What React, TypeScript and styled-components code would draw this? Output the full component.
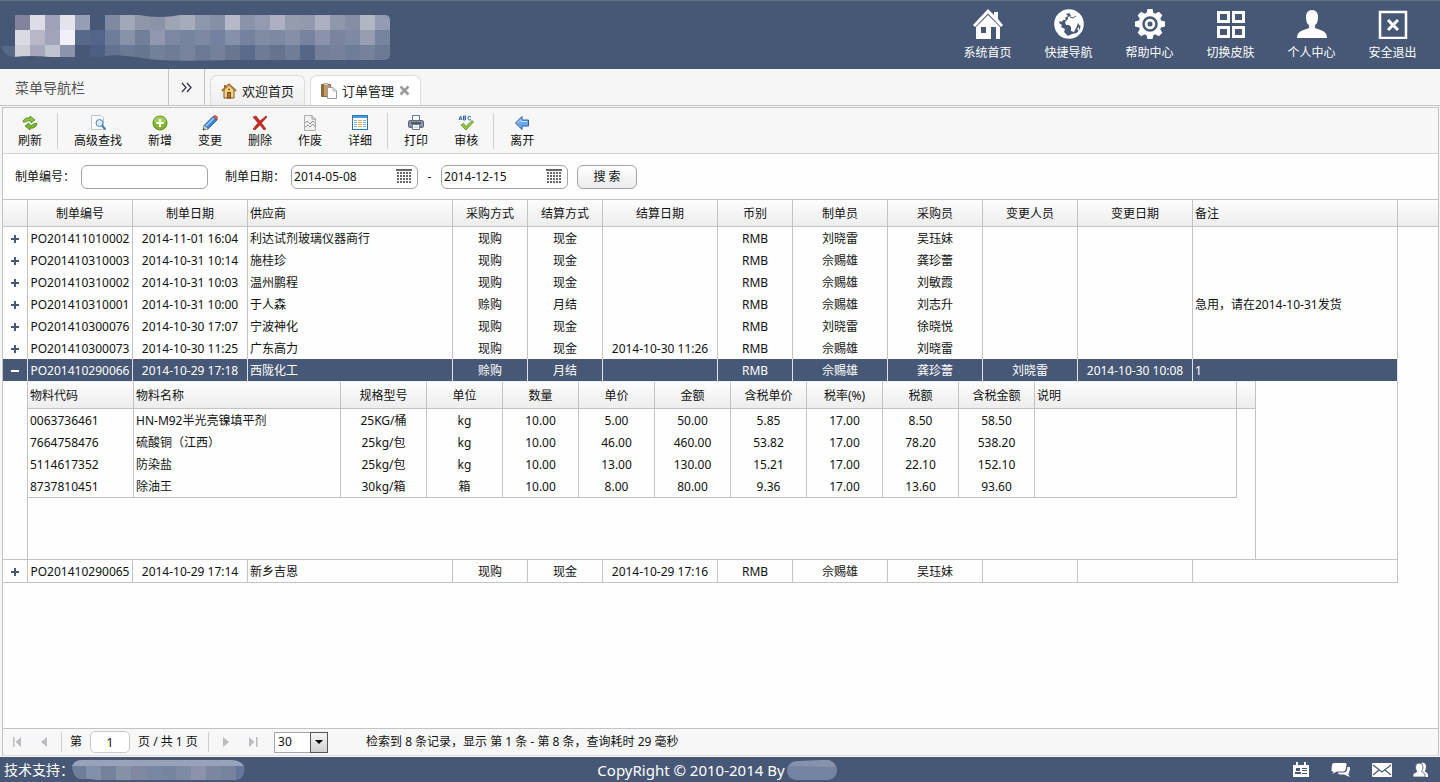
import React, { useState } from "react";
import styled, { createGlobalStyle, css } from "styled-components";

const NAVY = "#475877";
const LINE = "#c3c3c6";

const GlobalStyle = createGlobalStyle`
  *, *::before, *::after { box-sizing: border-box; }
  body { margin: 0; }
  body, button, input, select {
    font-family: "Noto Sans", "Noto Sans CJK SC", sans-serif;
    font-size: 12px;
    line-height: 16px;
    color: #111;
  }
  button { background: none; border: 0; padding: 0; cursor: pointer; }
  svg { display: block; }
`;

const Page = styled.div`
  display: flex;
  flex-direction: column;
  min-height: 100vh;
  background: #f6f6f7;
`;

/* ---------- top bar ---------- */

const TopBar = styled.header`
  display: flex;
  justify-content: space-between;
  height: 69px;
  padding-right: 7px;
  background: ${NAVY};
  border-top: 1px solid #62757f;
`;

const TopNav = styled.nav`
  display: flex;
`;

const TopLink = styled.a`
  display: flex;
  flex-direction: column;
  align-items: center;
  gap: 6px;
  width: 81px;
  padding-top: 8px;
  color: #fff;
  text-decoration: none;
`;

/* ---------- tab strip ---------- */

const Strip = styled.div`
  display: flex;
  height: 37px;
  background: #f6f6f7;
  border-bottom: 1px solid ${LINE};
`;

const MenuTitle = styled.div`
  width: 169px;
  padding: 9px 0 0 15px;
  font-size: 14px;
  line-height: 20px;
  color: #555;
  border-right: 1px solid ${LINE};
`;

const Toggle = styled.button`
  display: flex;
  align-items: center;
  justify-content: center;
  width: 36px;
  border-right: 1px solid ${LINE};
`;

const Tabs = styled.div`
  display: flex;
  align-items: flex-end;
  gap: 5px;
  padding-left: 5px;
`;

const Tab = styled.div<{ $active?: boolean }>`
  display: flex;
  align-items: center;
  gap: 5px;
  height: 30px;
  padding: 0 10px;
  border: 1px solid #dcdcde;
  border-bottom: 0;
  border-radius: 7px 7px 0 0;
  background: ${(p) => (p.$active ? "#fff" : "linear-gradient(#f9f9f9, #efeff0)")};
`;

const TabButton = styled.button`
  display: flex;
  align-items: center;
  gap: 5px;
  font-size: 13px;
  line-height: 20px;
  color: #222;
`;

/* ---------- panel ---------- */

const Panel = styled.main`
  display: flex;
  flex: 1;
  flex-direction: column;
  margin: 1px 1px 1px 2px;
  min-width: 0;
  background: #fefefe;
  border: 1px solid ${LINE};
  border-bottom-color: #ddd;
`;

const Toolbar = styled.div`
  display: flex;
  align-items: center;
  height: 46px;
  padding-left: 2px;
  background: #f7f7f7;
  border-bottom: 1px solid #d5d5d7;
`;

const Tool = styled.button`
  display: flex;
  flex-direction: column;
  align-items: center;
  gap: 2px;
  padding: 3px 13px 0;
`;

const Rule = styled.span<{ $gap: string }>`
  width: 1px;
  height: ${(p) => (p.$gap === "tool" ? "36px" : "20px")};
  margin: ${(p) => (p.$gap === "tool" ? "0 3px 0 2px" : "0 8px")};
  background: #d0d0d2;
`;

const SearchForm = styled.form`
  display: flex;
  align-items: center;
  height: 45px;
  padding-left: 12px;
`;

const Label = styled.label`
  margin-right: 6px;
`;

const Field = styled.div<{ $after?: string }>`
  display: flex;
  align-items: center;
  width: 127px;
  height: 24px;
  margin-right: ${(p) => p.$after ?? "0"};
  padding-right: 5px;
  background: #fff;
  border: 1px solid #a3a3a8;
  border-radius: 6px;
`;

const TextInput = styled.input`
  flex: 1;
  min-width: 0;
  padding: 0 2px;
  border: 0;
  background: none;
  outline: none;
`;

const Dash = styled.span`
  width: 23px;
  text-align: center;
`;

const SearchButton = styled.button`
  width: 60px;
  height: 24px;
  border: 1px solid #a3a3a8;
  border-radius: 6px;
  background: linear-gradient(#fff, #ececee);
`;

/* ---------- grids ---------- */

const GridArea = styled.div`
  flex: 1;
  overflow-x: auto;
`;

const Grid = styled.table`
  width: 100%;
  table-layout: fixed;
  border-collapse: separate;
  border-spacing: 0;
`;

type CellProps = { $left?: boolean };

const HeadRow = styled.tr<{ $inner?: boolean }>`
  th {
    height: 28px;
    border-top: 1px solid ${(p) => (p.$inner ? "transparent" : LINE)};
    border-bottom: 1px solid ${LINE};
    background: linear-gradient(#fdfdfd, #ededee);
  }
`;

const Th = styled.th<CellProps>`
  padding: 2px 2px 0;
  font-weight: normal;
  white-space: nowrap;
  text-align: ${(p) => (p.$left ? "left" : "center")};
  border-right: 1px solid ${LINE};
`;

const Filler = styled.th`
  padding: 0;
`;

const Row = styled.tr<{ $selected?: boolean; $edge?: boolean }>`
  ${(p) =>
    p.$selected &&
    css`
      td { background: ${NAVY}; color: #fff; border-right-color: #dfe2e8; }
    `}
  ${(p) =>
    p.$edge &&
    css`
      td { border-bottom: 1px solid ${LINE}; height: 23px; }
    `}
`;

const Td = styled.td<CellProps>`
  height: 22px;
  padding: 2px 2px 0;
  overflow: hidden;
  white-space: nowrap;
  text-align: ${(p) => (p.$left ? "left" : "center")};
  border-right: 1px solid ${LINE};
`;

const DetailCell = styled.td`
  height: 179px;
  padding: 0;
  vertical-align: top;
  border-right: 1px solid ${LINE};
  border-bottom: 1px solid ${LINE};
`;

const DetailBox = styled.div`
  width: 1228px;
  height: 178px;
  border-right: 1px solid ${LINE};
`;

const Expander = styled.button`
  display: block;
  margin: 0 auto;
`;

/* ---------- pager and footer ---------- */

const Pager = styled.div`
  display: flex;
  align-items: center;
  height: 27px;
  padding-left: 6px;
  background: #f7f7f7;
  border-top: 1px solid ${LINE};
`;

const PageButton = styled.button`
  display: flex;
  justify-content: center;
  width: 16px;
`;

const Gap = styled.span<{ $w: number }>`
  width: ${(p) => p.$w}px;
`;

const PageInput = styled.input`
  width: 40px;
  height: 22px;
  margin: 0 8px;
  text-align: center;
  border: 1px solid #c9c9cc;
  border-radius: 5px;
  background: #fff;
`;

const PageCount = styled.span`
  min-width: 62px;
`;

const SelectBox = styled.div`
  position: relative;
  width: 54px;
  height: 21px;
`;

const Select = styled.select`
  appearance: none;
  width: 100%;
  height: 100%;
  padding: 0 3px;
  border: 1px solid #a3a3a8;
  border-radius: 0;
  background: #fff;
`;

const SelectArrow = styled.span`
  position: absolute;
  inset: 0 0 0 auto;
  display: flex;
  align-items: center;
  justify-content: center;
  width: 18px;
  border: 1px solid #555;
  background: linear-gradient(#f4f4f4, #d2d2d4);
  pointer-events: none;
`;

const Footer = styled.footer`
  display: grid;
  grid-template-columns: 1fr auto 1fr;
  align-items: center;
  height: 25px;
  padding: 0 10px 0 4px;
  background: ${NAVY};
  color: #fff;
  font-size: 14px;
  line-height: 20px;
`;

const FootGroup = styled.div<{ $end?: boolean }>`
  display: flex;
  align-items: center;
  justify-content: ${(p) => (p.$end ? "flex-end" : "flex-start")};
  gap: ${(p) => (p.$end ? "20px" : "0")};
`;

const Copyright = styled.div`
  display: flex;
  align-items: center;
  gap: 2px;
  font-size: 15px;
`;

const SupportName = styled.span`
  margin-left: -4px;
`;

const FootLink = styled.a`
  display: block;
  color: #fff;
`;

/* ---------- drawings ---------- */

const LOGO = [
  ["#82839e", "#dddde7", "#9fa2b8", "#e3e3ec", "#959eb5", "", "#7f89a2", "#a1a9b9", "#8e97aa", "#8a94a9", "#9da4b4", "#a5acba", "#8e98ac", "#858fa6", "#b5b8c6", "#8993a9", "#949bb0", "#acb0c2", "#949cae", "#9499ae", "#acb0c0", "#8f97aa", "#858ea5", "#b1b6c3", "#929bb1", "#858fa8"],
  ["#dadae5", "#b7b7c7", "#a1a3b8", "#f0f0f6", "#57698a", "#52658a", "#6e7d99", "#8792aa", "#717f9a", "#9199b0", "#7c88a2", "#77849e", "#7d89a2", "#7481a0", "#8590aa", "#75829f", "#808ba4", "#7d88a3", "#8590a8", "#77839f", "#8a93ab", "#79849f", "#7e8aa4", "#979eb2", "#77849f", "#7f8aa4"],
  ["#cfcfda", "#a4a8ba", "#bdc3cf", "#8c94a9", "", "#4c5e82", "#63728f", "#6b7995", "#67768f", "#728098", "#6f7c96", "#78849d", "#6b7995", "#75819a", "#68768f", "#5b6b8b", "#6e7b97", "#65738f", "#707d98", "#556687", "#74809a", "#76829b", "#707d98", "#76829b", "#6b7995", "#75819a"],
];

const LogoMosaic = () => (
  <svg width="394" height="68" viewBox="0 1 394 68" aria-hidden="true">
    <defs>
      <clipPath id="logo-edge">
        <path d="M14 15H139Q160 19 180 15H386Q390 16 390 20V56Q389 60 384 60H230Q160 62 142 58Q112 53 102 57H50Q30 55 14 57Z" />
      </clipPath>
    </defs>
    <path d="M2 46H15V57Q5 57 2 48Z" fill="#586986" />
    <g clipPath="url(#logo-edge)">
      {LOGO.map((row, y) =>
        row.map((c, x) => c && <rect key={`${x}-${y}`} x={15 + x * 15} y={15 + y * 15} width="15" height={y === 2 ? 17 : 15} fill={c} />)
      )}
    </g>
  </svg>
);

const SUPPORT = ["#707f99", "#8390a9", "#74829c", "#8591a6", "#8189a2", "#7887a2", "#75849f", "#7d8ba4", "#8c92ac", "#7b87a0", "#75839d", "#66769a"];

const SupportMosaic = () => (
  <svg width="176" height="22" viewBox="0 0 176 22" aria-hidden="true">
    <defs>
      <clipPath id="support-edge">
        <path d="M2 7Q5 1 12 1H160Q170 1 174 7Q176 20 166 21H30Q24 21 20 20H10Q3 19 2 7Z" />
      </clipPath>
    </defs>
    <g clipPath="url(#support-edge)">
      {SUPPORT.map((c, i) => <rect key={i} x={i * 15 + 1} width="15" height="22" fill={c} />)}
      <rect width="176" height="7" fill="#98a3ba" />
    </g>
  </svg>
);

const NameMosaic = () => (
  <svg width="50" height="20" viewBox="0 0 50 20" aria-hidden="true">
    <rect y="1" width="50" height="19" rx="9" fill="#7483a0" />
    <path d="M2 6Q5 2 12 1L34 0H42Q48 2 49 7Z" fill="#8793ac" />
  </svg>
);

const I30 = ({ children }: { children: React.ReactNode }) => (
  <svg width="30" height="30" viewBox="0 0 30 30" fill="#fff" aria-hidden="true">{children}</svg>
);

const I16 = ({ children, size = 16 }: { children: React.ReactNode; size?: number }) => (
  <svg width={size} height={size} viewBox="0 0 16 16" fill="none" aria-hidden="true">{children}</svg>
);

const HomeIcon = () => (
  <I30>
    <path d="M15 0L21 6V3H25V10L30 16L28 18L15 4.500L2 18L0 16Z" />
    <path fillRule="evenodd" d="M15 6L27 18V30H23V18H18V30H3V18ZM8 18V24H13V18Z" />
  </I30>
);

const GlobeIcon = () => (
  <I30>
    <circle cx="15" cy="15" r="13.300" fill="none" stroke="#fff" strokeWidth="3" />
    <path d="M3 8L7 4L13 2L16 4L12 5L14 7L11 9L12 11L9 11L8 13L6 12L5 14L8 16L7 18L11 20L10 23L13 26L12 29L5 26L1 17Z" />
    <path d="M15 3L19 1L25 5L29 12L28 16L26 17L24 14L23 17L20 23L17 22L17 18L15 16L12 16L11 13L14 10L14 8L17 7Z" />
    <path d="M12 28L18 25L22 24L19 29L12 29ZM23 20L25 18L25 22Z" />
    <path d="M16 8L19 9L22 7" fill="none" stroke={NAVY} strokeWidth="1" />
  </I30>
);

const GearIcon = () => (
  <I30>
    {[0, 45, 90, 135, 180, 225, 270, 315].map((a) => (
      <path key={a} d="M11 6L12.500 0H17.500L19 6Z" transform={`rotate(${a} 15 15)`} />
    ))}
    <circle cx="15" cy="15" r="11.500" />
    <circle cx="15" cy="15" r="6.500" fill="none" stroke={NAVY} strokeWidth="2.500" />
    <circle cx="15" cy="15" r="2.500" fill={NAVY} />
  </I30>
);

const SkinIcon = () => (
  <I30>
    <g fill="none" stroke="#fff" strokeWidth="3">
      <rect x="2.500" y="3.500" width="10" height="9" />
      <rect x="17.500" y="3.500" width="10" height="9" />
      <rect x="2.500" y="18.500" width="10" height="9" />
      <rect x="17.500" y="18.500" width="10" height="9" />
    </g>
  </I30>
);

const UserIcon = () => (
  <I30>
    <path d="M15 1C19 1 21 4 21 8C21 12 20 15 18 16V19L26 22Q30 24 30 29H0Q0 24 4 22L12 19V16C10 15 9 12 9 8C9 4 11 1 15 1Z" />
  </I30>
);

const ExitIcon = () => (
  <I30>
    <rect x="2" y="3" width="26" height="26" fill="none" stroke="#fff" strokeWidth="2.500" />
    <path d="M10 11L20 21M20 11L10 21" stroke="#fff" strokeWidth="3" />
  </I30>
);

const HouseTabIcon = () => (
  <I16>
    <path d="M3 7L8 2L13 7V15H3Z" fill="#f4d489" stroke="#7f5a26" />
    <path d="M1 8L8 1.500L15 8" stroke="#8d642a" strokeWidth="2" />
    <path d="M1.500 8L8 2L14.500 8" stroke="#e2a942" strokeWidth="0.800" />
    <path d="M3 2H5V5L3 6Z" fill="#a56a2c" />
    <rect x="6.500" y="9.500" width="3" height="5.500" fill="#b9772b" stroke="#71491c" />
    <circle cx="8" cy="6.500" r="1" fill="#80551f" />
  </I16>
);

const PaperTabIcon = () => (
  <I16>
    <path d="M0.500 1.500H9.500V13.500H0.500Z" fill="#c69b5d" stroke="#85693d" />
    <path d="M2 2V13" stroke="#8f6c3c" strokeWidth="2" />
    <rect x="3" y="0.500" width="4" height="2" fill="#ddd" stroke="#888" strokeWidth="0.600" />
    <path d="M6.500 4.500H12L15.500 8V15.500H6.500Z" fill="#fbfbfb" stroke="#9a9a9a" />
    <path d="M12 4.500V8H15.500" stroke="#b5b5b5" />
  </I16>
);

const RefreshIcon = () => (
  <I16>
    <path d="M1 7Q2 2 8 3L8 1L13 5L9 8V6Q5 5 4 7Z" fill="#8cc63a" stroke="#4d8420" strokeWidth="0.800" />
    <path d="M15 8.500Q14 14 8 13V15L3 11L7 8V10Q11 11 12 8.500Z" fill="#79b62c" stroke="#4d8420" strokeWidth="0.800" />
  </I16>
);

const FindIcon = () => (
  <I16>
    <path d="M1.500 0.500H11L13.500 3V14.500H1.500Z" fill="#fbfcfd" stroke="#b9c4cf" />
    <circle cx="9.500" cy="8" r="3.500" fill="#d5eaf7" stroke="#5585a8" />
    <path d="M12 10.500L15.500 14.500" stroke="#4a7ca3" strokeWidth="2" />
  </I16>
);

const AddIcon = () => (
  <I16>
    <circle cx="8" cy="8" r="7" fill="#7fb52b" stroke="#5d8e1b" />
    <path d="M2 7A6 5.500 0 0 1 14 7Q8 9 2 7Z" fill="#a4cf57" />
    <path d="M8 4V12M4 8H12" stroke="#fff" strokeWidth="2.200" />
  </I16>
);

const EditIcon = () => (
  <I16>
    <path d="M1 15L2 10.500L11 1.500L15 5L6 14Z" fill="#3b85d6" stroke="#1e4e93" strokeWidth="0.800" />
    <path d="M4 11L12 3" stroke="#a7d3fa" strokeWidth="1.300" />
    <path d="M11 1.500Q13 -0.500 15 1.500Q16 3.500 15 5Z" fill="#d96956" stroke="#863528" strokeWidth="0.600" />
    <path d="M1 15L2 10.500L6 14Z" fill="#f0cf9a" />
    <path d="M1 15L1.500 13L3 14.300Z" fill="#222" />
  </I16>
);

const DeleteIcon = () => (
  <I16>
    <path d="M1 2L4 1L8 6L14 1L15 2L9.500 8L14 14L12 15L8 10L3 15L1 14L6 8Z" fill="#c92a22" stroke="#96201b" strokeWidth="0.600" />
  </I16>
);

const VoidIcon = () => (
  <I16>
    <path d="M2.500 0.500H10L13.500 4V15.500H2.500Z" fill="#f1f1f1" stroke="#adadad" />
    <path d="M10 0.500V4H13.500M3 8L5 6L8 9L11 6L13 8M3 12L6 10L8 12L11 9L13 12" stroke="#999" />
  </I16>
);

const DetailIcon = () => (
  <I16>
    <rect x="0.500" y="0.500" width="15" height="14" fill="#fff" stroke="#2a74b0" />
    <path d="M1 2H15" stroke="#4c9bd8" strokeWidth="2" />
    <path d="M2 5.500H5M2 7.500H5M2 9.500H5M2 11.500H5M11 5.500H14M11 7.500H14M11 9.500H14M11 11.500H14" stroke="#7fb2d8" />
    <path d="M6 5.500H10M6 7.500H10M6 9.500H10M6 11.500H10" stroke="#dcaf56" />
  </I16>
);

const PrintIcon = () => (
  <I16>
    <path d="M4.500 0.500H11.500V6H4.500Z" fill="#f4f6f8" stroke="#6a7785" />
    <rect x="0.500" y="5.500" width="15" height="7" rx="1.500" fill="#8795a5" stroke="#5a6876" />
    <path d="M3 8H13" stroke="#3b4754" strokeWidth="1.500" />
    <path d="M4.500 9.500H11.500V14.500H4.500Z" fill="#fff" stroke="#6a7785" />
    <path d="M6 12H10" stroke="#9eb2c5" />
  </I16>
);

const CheckIcon = () => (
  <I16>
    <path d="M1 5L2.500 1L4 5M1.500 4H3.500M5.500 1V5H7Q9 4 7 3H5.500M7 3Q9 1 7 1H5.500M13 2Q10 0 10 3Q10 6 13 4.500" stroke="#2a62ab" />
    <path d="M3 10L5.500 8.500L8 11.500L14 5.500L15.500 7L8 15Z" fill="#93c83e" stroke="#517f1f" strokeWidth="0.700" />
  </I16>
);

const LeaveIcon = () => (
  <I16>
    <path d="M1.500 8L8 1.500V5H14.500V11H8V14.500Z" fill="#6ba9e8" stroke="#2c5faa" />
    <path d="M3.500 8L7 4.500V6.500H13" stroke="#c6e1fa" />
  </I16>
);

const CalendarIcon = () => (
  <svg width="16" height="15" viewBox="0 0 16 15" fill="#666" aria-hidden="true">
    <rect width="16" height="2" />
    {[3, 6, 9, 12].map((y) => [0, 3, 6, 9, 12].map((x) => (
      <rect key={`${x}-${y}`} x={x + 1} y={y} width="2" height="2" />
    )))}
  </svg>
);

const arrows: Record<string, React.ReactNode> = {
  first: <path d="M4 3H5.500V13H4ZM12 3V13L6.500 8Z" />,
  prev: <path d="M11 3V13L5 8Z" />,
  next: <path d="M5 3V13L11 8Z" />,
  last: <path d="M4 3V13L9.500 8ZM11 3H12.500V13H11Z" />,
};

const Arrow = ({ kind, label }: { kind: string; label: string }) => (
  <PageButton type="button" aria-label={label}>
    <svg width="16" height="16" viewBox="0 0 16 16" fill="#bcbcc0" aria-hidden="true">{arrows[kind]}</svg>
  </PageButton>
);

/* ---------- data ---------- */

const topLinks: [string, React.FC][] = [
  ["系统首页", HomeIcon], ["快捷导航", GlobeIcon], ["帮助中心", GearIcon],
  ["切换皮肤", SkinIcon], ["个人中心", UserIcon], ["安全退出", ExitIcon],
];

const toolGroups: [string, React.FC][][] = [
  [["刷新", RefreshIcon]],
  [["高级查找", FindIcon], ["新增", AddIcon], ["变更", EditIcon], ["删除", DeleteIcon], ["作废", VoidIcon], ["详细", DetailIcon]],
  [["打印", PrintIcon], ["审核", CheckIcon]],
  [["离开", LeaveIcon]],
];

type Column = { title: string; width: number; left?: boolean };

const columns: Column[] = [
  { title: "制单编号", width: 105 }, { title: "制单日期", width: 115 }, { title: "供应商", width: 205, left: true },
  { title: "采购方式", width: 75 }, { title: "结算方式", width: 75 }, { title: "结算日期", width: 115 },
  { title: "币别", width: 75 }, { title: "制单员", width: 95 }, { title: "采购员", width: 95 },
  { title: "变更人员", width: 95 }, { title: "变更日期", width: 115 }, { title: "备注", width: 205, left: true },
];

const orders: string[][] = [
  ["PO201411010002", "2014-11-01 16:04", "利达试剂玻璃仪器商行", "现购", "现金", "", "RMB", "刘晓雷", "吴珏妹", "", "", ""],
  ["PO201410310003", "2014-10-31 10:14", "施桂珍", "现购", "现金", "", "RMB", "佘赐雄", "龚珍蕾", "", "", ""],
  ["PO201410310002", "2014-10-31 10:03", "温州鹏程", "现购", "现金", "", "RMB", "佘赐雄", "刘敏霞", "", "", ""],
  ["PO201410310001", "2014-10-31 10:00", "于人森", "赊购", "月结", "", "RMB", "佘赐雄", "刘志升", "", "", "急用，请在2014-10-31发货"],
  ["PO201410300076", "2014-10-30 17:07", "宁波神化", "现购", "现金", "", "RMB", "刘晓雷", "徐晓悦", "", "", ""],
  ["PO201410300073", "2014-10-30 11:25", "广东高力", "现购", "现金", "2014-10-30 11:26", "RMB", "佘赐雄", "刘晓雷", "", "", ""],
  ["PO201410290066", "2014-10-29 17:18", "西陇化工", "赊购", "月结", "", "RMB", "佘赐雄", "龚珍蕾", "刘晓雷", "2014-10-30 10:08", "1"],
  ["PO201410290065", "2014-10-29 17:14", "新乡吉恩", "现购", "现金", "2014-10-29 17:16", "RMB", "佘赐雄", "吴珏妹", "", "", ""],
];

const itemColumns: Column[] = [
  { title: "物料代码", width: 106, left: true }, { title: "物料名称", width: 207, left: true },
  { title: "规格型号", width: 86 }, { title: "单位", width: 76 }, { title: "数量", width: 76 },
  { title: "单价", width: 76 }, { title: "金额", width: 76 }, { title: "含税单价", width: 76 },
  { title: "税率(%)", width: 76 }, { title: "税额", width: 76 }, { title: "含税金额", width: 76 },
  { title: "说明", width: 202, left: true },
];

const items: string[][] = [
  ["0063736461", "HN-M92半光亮镍填平剂", "25KG/桶", "kg", "10.00", "5.00", "50.00", "5.85", "17.00", "8.50", "58.50", ""],
  ["7664758476", "硫酸铜（江西）", "25kg/包", "kg", "10.00", "46.00", "460.00", "53.82", "17.00", "78.20", "538.20", ""],
  ["5114617352", "防染盐", "25kg/包", "kg", "10.00", "13.00", "130.00", "15.21", "17.00", "22.10", "152.10", ""],
  ["8737810451", "除油王", "30kg/箱", "箱", "10.00", "8.00", "80.00", "9.36", "17.00", "13.60", "93.60", ""],
];

const ItemTable = () => (
  <Grid>
    <colgroup>
      {itemColumns.map((c) => <col key={c.title} style={{ width: c.width }} />)}
      <col />
    </colgroup>
    <thead>
      <HeadRow $inner>
        {itemColumns.map((c) => <Th key={c.title} $left={c.left}>{c.title}</Th>)}
        <Filler />
      </HeadRow>
    </thead>
    <tbody>
      {items.map((row, i) => (
        <Row key={row[0]} $edge={i === items.length - 1}>
          {row.map((v, j) => <Td key={j} $left={itemColumns[j].left}>{v}</Td>)}
        </Row>
      ))}
    </tbody>
  </Grid>
);

const OrderTable = () => {
  const [open, setOpen] = useState<string | null>("PO201410290066");
  return (
    <Grid>
      <colgroup>
        <col style={{ width: 25 }} />
        {columns.map((c) => <col key={c.title} style={{ width: c.width }} />)}
        <col />
      </colgroup>
      <thead>
        <HeadRow>
          <Th />
          {columns.map((c) => <Th key={c.title} $left={c.left}>{c.title}</Th>)}
          <Filler />
        </HeadRow>
      </thead>
      <tbody>
        {orders.map((row, i) => {
          const selected = row[0] === open;
          return (
            <React.Fragment key={row[0]}>
              <Row $selected={selected} $edge={i === orders.length - 1}>
                <Td>
                  <Expander type="button" aria-label={selected ? "收起" : "展开"} onClick={() => setOpen(selected ? null : row[0])}>
                    <svg width="8" height="8" viewBox="0 0 8 8" fill={selected ? "#fff" : NAVY} aria-hidden="true">
                      <path d={selected ? "M0 3H8V5H0Z" : "M3 0H5V3H8V5H5V8H3V5H0V3H3Z"} />
                    </svg>
                  </Expander>
                </Td>
                {row.map((v, j) => <Td key={j} $left={columns[j].left}>{v}</Td>)}
              </Row>
              {selected && (
                <tr>
                  <DetailCell />
                  <DetailCell colSpan={columns.length}>
                    <DetailBox><ItemTable /></DetailBox>
                  </DetailCell>
                </tr>
              )}
            </React.Fragment>
          );
        })}
      </tbody>
    </Grid>
  );
};

export default function App() {
  return (
    <Page>
      <GlobalStyle />
      <TopBar>
        <LogoMosaic />
        <TopNav>
          {topLinks.map(([label, Icon]) => <TopLink key={label} href="#"><Icon />{label}</TopLink>)}
        </TopNav>
      </TopBar>

      <Strip>
        <MenuTitle>菜单导航栏</MenuTitle>
        <Toggle type="button" aria-label="展开菜单">
          <svg width="11" height="11" viewBox="0 0 11 11" fill="none" stroke="#334" strokeWidth="1.300" aria-hidden="true">
            <path d="M1 1L5 5.500L1 10M6 1L10 5.500L6 10" />
          </svg>
        </Toggle>
        <Tabs>
          <Tab><TabButton type="button"><HouseTabIcon />欢迎首页</TabButton></Tab>
          <Tab $active>
            <TabButton type="button"><PaperTabIcon />订单管理</TabButton>
            <button type="button" aria-label="关闭">
              <svg width="11" height="11" viewBox="0 0 11 11" stroke="#999" strokeWidth="2.500" aria-hidden="true">
                <path d="M1.500 1.500L9.500 9.500M9.500 1.500L1.500 9.500" />
              </svg>
            </button>
          </Tab>
        </Tabs>
      </Strip>

      <Panel>
        <Toolbar>
          {toolGroups.map((group, i) => (
            <React.Fragment key={i}>
              {i > 0 && <Rule $gap="tool" />}
              {group.map(([label, Icon]) => <Tool key={label} type="button"><Icon />{label}</Tool>)}
            </React.Fragment>
          ))}
        </Toolbar>

        <SearchForm onSubmit={(e) => e.preventDefault()}>
          <Label htmlFor="order-no">制单编号：</Label>
          <Field $after="17px"><TextInput id="order-no" /></Field>
          <Label htmlFor="date-from">制单日期：</Label>
          <Field><TextInput id="date-from" defaultValue="2014-05-08" /><CalendarIcon /></Field>
          <Dash>-</Dash>
          <Field $after="9px"><TextInput aria-label="结束日期" defaultValue="2014-12-15" /><CalendarIcon /></Field>
          <SearchButton type="submit">搜 索</SearchButton>
        </SearchForm>

        <GridArea><OrderTable /></GridArea>

        <Pager>
          <Arrow kind="first" label="首页" />
          <Gap $w={11} />
          <Arrow kind="prev" label="上一页" />
          <Gap $w={1} />
          <Rule $gap="pager" />
          <label htmlFor="page-no">第</label>
          <PageInput id="page-no" defaultValue="1" />
          <PageCount>页 / 共 1 页</PageCount>
          <Rule $gap="pager" />
          <Gap $w={1} />
          <Arrow kind="next" label="下一页" />
          <Gap $w={11} />
          <Arrow kind="last" label="末页" />
          <Gap $w={13} />
          <SelectBox>
            <Select aria-label="每页条数" defaultValue="30">
              <option>30</option>
              <option>50</option>
            </Select>
            <SelectArrow>
              <svg width="8" height="4" viewBox="0 0 8 4" aria-hidden="true"><path d="M0 0H8L4 4Z" /></svg>
            </SelectArrow>
          </SelectBox>
          <Gap $w={38} />
          <span>检索到 8 条记录，显示 第 1 条 - 第 8 条，查询耗时 29 毫秒</span>
        </Pager>
      </Panel>

      <Footer>
        <FootGroup>技术支持：<SupportName><SupportMosaic /></SupportName></FootGroup>
        <Copyright>CopyRight © 2010-2014 By <NameMosaic /></Copyright>
        <FootGroup $end>
          <FootLink href="#" aria-label="名片">
            <svg width="18" height="16" viewBox="0 0 18 16" fill="#fff" aria-hidden="true">
              <path fillRule="evenodd" d="M1 3H4V0H6V3H12V0H14V3H17V15H1ZM4 6V9H8V6ZM3 10V12H9V10ZM10 6V7H15V6ZM10 8V9H15V8ZM10 11V12H15V11Z" />
            </svg>
          </FootLink>
          <FootLink href="#" aria-label="留言">
            <svg width="22" height="16" viewBox="0 0 22 16" fill="#fff" aria-hidden="true">
              <path d="M4 1H15Q17 1 16.500 3L15.500 8Q15 9.500 13 9.500H7L2 12L4 9.500Q1 9.500 1.500 8L2 3Q2.500 1 4 1Z" />
              <path d="M17.500 5H19Q20.500 5 20 7L19 11Q19 12 18 12L20 15L14 12.500H10Q8 12.500 8 10.500H14Q16.500 10 17 8Z" />
            </svg>
          </FootLink>
          <FootLink href="#" aria-label="邮件">
            <svg width="20" height="14" viewBox="0 0 20 14" aria-hidden="true">
              <rect width="20" height="14" rx="1" fill="#fff" />
              <path d="M1 2L10 9L19 2M1 12L7 7M19 12L13 7" fill="none" stroke={NAVY} strokeWidth="1.200" />
            </svg>
          </FootLink>
          <FootLink href="#" aria-label="用户">
            <svg width="18" height="16" viewBox="0 0 18 16" fill="#fff" aria-hidden="true">
              <path d="M9 1Q14 0 14 5Q14 8 12.500 9L16 12V15H12L8 10Z" />
              <path d="M7 1Q11 1 11 5Q11 8 9.500 9.500L13 12V15H1V12L5 9.500Q3.500 8 3.500 5Q3.500 1 7 1Z" stroke={NAVY} strokeWidth="0.800" />
            </svg>
          </FootLink>
        </FootGroup>
      </Footer>
    </Page>
  );
}
